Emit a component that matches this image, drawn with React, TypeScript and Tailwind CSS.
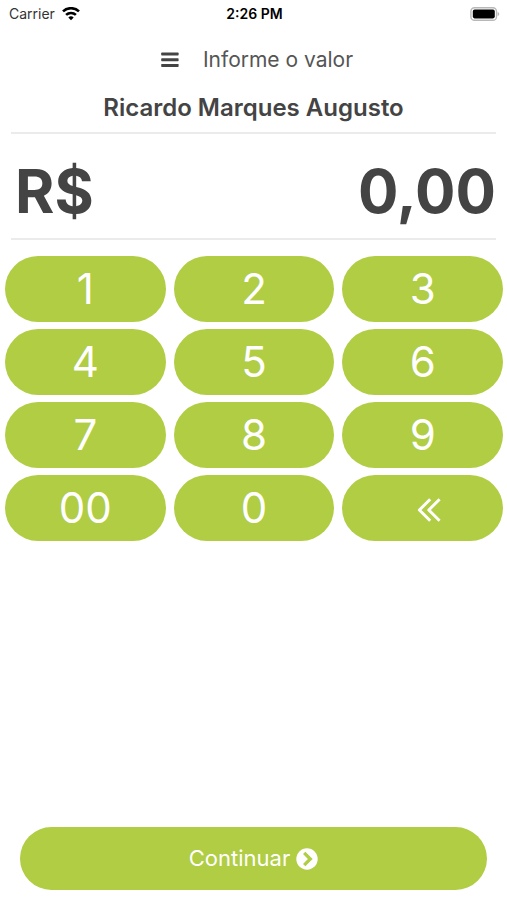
const keys = ["1", "2", "3", "4", "5", "6", "7", "8", "9", "00", "0"];

const WifiIcon = () => (
  <svg viewBox="0 0 18 14" className="h-[14px] w-[18px]" fill="none" stroke="#000" strokeWidth="2.6" aria-hidden="true">
    <path d="M1 4.4a11.6 11.6 0 0 1 16 0" />
    <path d="M4.1 7.9a7.1 7.1 0 0 1 9.8 0" />
    <path d="M6.3 10.5a3.9 3.9 0 0 1 5.4 0L9 13.2z" fill="#000" stroke="none" />
  </svg>
);

const BatteryIcon = () => (
  <svg viewBox="0 0 30 14" className="h-[14px] w-[30px]" aria-hidden="true">
    <rect x="0.9" y="0.7" width="25.6" height="12.6" rx="3.6" fill="#fff" stroke="#b8b8b8" strokeWidth="1.4" />
    <rect x="2.8" y="2.6" width="22" height="8.8" rx="1.8" fill="#000" />
    <path d="M27.6 4.9v4.2c1-.4 1.7-1.2 1.7-2.1s-.7-1.7-1.7-2.1z" fill="#b8b8b8" />
  </svg>
);

const MenuIcon = () => (
  <svg viewBox="0 0 18 16" className="h-4 w-[18px]" fill="#444" aria-hidden="true">
    <rect x="0.2" y="0.5" width="17.4" height="3" rx="0.7" />
    <rect x="0.2" y="6.2" width="17.4" height="3" rx="0.7" />
    <rect x="0.2" y="11.9" width="17.4" height="3" rx="0.7" />
  </svg>
);

const DoubleLeftIcon = () => (
  <svg viewBox="0 0 24 26" className="h-[26px] w-6" fill="none" stroke="#fff" strokeWidth="3" strokeLinejoin="round" aria-hidden="true">
    <path d="M13.2 2.2 2.4 13l10.8 10.8" />
    <path d="M22.6 2.2 11.8 13l10.8 10.8" />
  </svg>
);

const NextIcon = () => (
  <svg viewBox="0 0 22 22" className="h-[22px] w-[22px]" aria-hidden="true">
    <circle cx="11" cy="11" r="10.7" fill="#fff" />
    <path d="M8.2 4.9l6.1 6.1-6.1 6.1" fill="none" stroke="#b0cd44" strokeWidth="3.3" />
  </svg>
);

const App = () => {
  return (
    <div className="flex min-h-screen flex-col bg-white font-['Inter','Liberation_Sans',sans-serif] text-[#444]">
      <div className="grid h-[27px] grid-cols-3 items-center pr-[7px] pl-[9px] text-sm text-black">
        <div className="flex items-center gap-[7px]">
          <span className="text-[#333]">Carrier</span>
          <WifiIcon />
        </div>
        <span className="text-center font-semibold">2:26 PM</span>
        <div className="flex justify-end">
          <BatteryIcon />
        </div>
      </div>

      <header className="flex h-[65px] items-center justify-center gap-6 pl-[7px]">
        <button type="button" aria-label="Menu">
          <MenuIcon />
        </button>
        <h1 className="text-[21px] font-normal text-[#555]">Informe o valor</h1>
      </header>

      <main className="flex flex-1 flex-col">
        <section className="px-[11px]">
          <h2 className="flex h-[42px] items-center justify-center border-b-2 border-[#ebebeb] pb-2 text-2xl leading-8 font-semibold">
            Ricardo Marques Augusto
          </h2>
          <div className="flex h-[106px] items-center justify-between border-b-2 border-[#ebebeb] pt-[10px] pl-1 text-[60px] leading-none font-bold">
            <span>R$</span>
            <output>0,00</output>
          </div>
        </section>

        <div className="grid grid-cols-3 gap-x-2 gap-y-[7px] pt-4 pr-1 pl-[5px]">
          {keys.map((key) => (
            <button
              key={key}
              type="button"
              className="h-[66px] rounded-full bg-[#b0cd44] text-[42px] leading-none font-normal text-white"
            >
              {key}
            </button>
          ))}
          <button
            type="button"
            aria-label="Apagar"
            className="flex h-[66px] items-center justify-center rounded-full bg-[#b0cd44] pt-1 pl-3"
          >
            <DoubleLeftIcon />
          </button>
        </div>

        <div className="mt-auto px-5 pt-6 pb-[10px]">
          <button
            type="button"
            className="flex h-[63px] w-full items-center justify-center gap-[6px] rounded-full bg-[#b0cd44] text-[22px] font-normal text-white"
          >
            Continuar
            <NextIcon />
          </button>
        </div>
      </main>
    </div>
  );
};

export default App;
